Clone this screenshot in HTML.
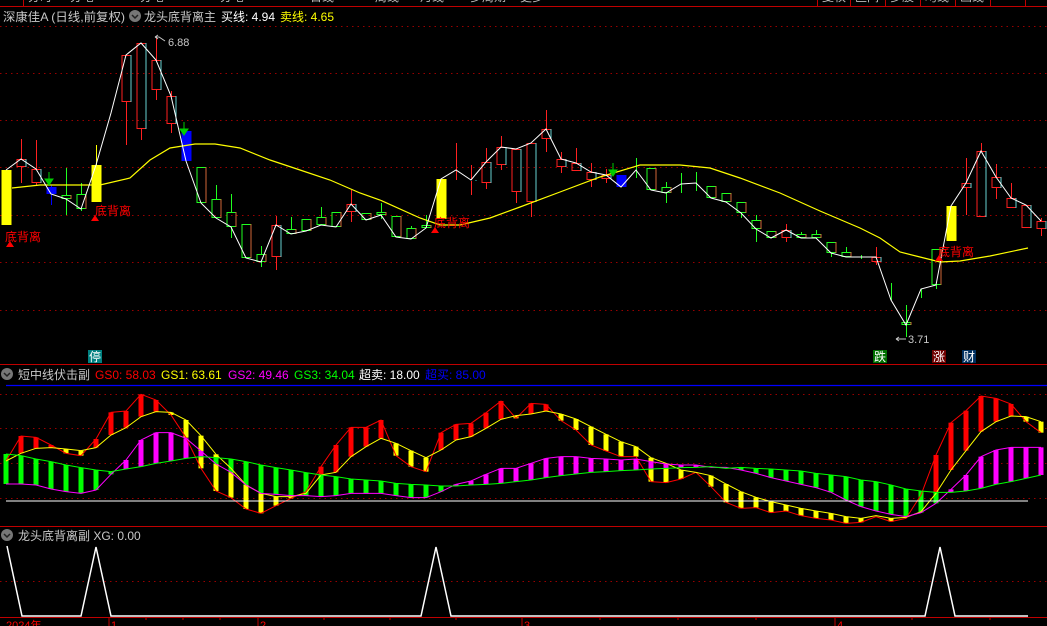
<!DOCTYPE html>
<html><head><meta charset="utf-8">
<style>
html,body{margin:0;padding:0;background:#000;width:1047px;height:626px;overflow:hidden}
svg{display:block}
text{font-family:"Liberation Sans","Noto Sans CJK SC",sans-serif}
</style></head><body>
<svg id="s" width="1047" height="626" xmlns="http://www.w3.org/2000/svg">
<rect width="1047" height="626" fill="#000"/>
<!-- top bar -->
<g fill="#bbb" font-size="12">
<text x="28" y="1">分时</text><text x="70" y="1">分笔</text><text x="140" y="1">分笔</text><text x="220" y="1">分笔</text><text x="310" y="1">日线</text><text x="375" y="1">周线</text><text x="420" y="1">月线</text><text x="470" y="1">多周期</text><text x="520" y="1">更多</text>
<text x="822" y="1">复权</text><text x="855" y="1">区间</text><text x="890" y="1">多股</text><text x="925" y="1">均线</text><text x="960" y="1">画线</text>
</g>
<line x1="0" y1="6.5" x2="1047" y2="6.5" stroke="#c00000"/>
<g stroke="#c00000"><line x1="23.5" y1="0" x2="23.5" y2="6"/><line x1="817.5" y1="0" x2="817.5" y2="6"/><line x1="850.5" y1="0" x2="850.5" y2="6"/><line x1="885.5" y1="0" x2="885.5" y2="6"/><line x1="920.5" y1="0" x2="920.5" y2="6"/><line x1="955.5" y1="0" x2="955.5" y2="6"/><line x1="990.5" y1="0" x2="990.5" y2="6"/><line x1="1025.5" y1="0" x2="1025.5" y2="6"/></g>
<!-- main header -->
<text x="3" y="21" font-size="12" fill="#c8c8c8" textLength="122" lengthAdjust="spacingAndGlyphs">深康佳A (日线,前复权)</text>
<circle cx="135" cy="16" r="6" fill="#777"/><path d="M132 15 l3 3 l3 -3" stroke="#222" stroke-width="1.5" fill="none"/>
<text x="144" y="21" font-size="12" fill="#c8c8c8" textLength="72" lengthAdjust="spacingAndGlyphs">龙头底背离主</text>
<text x="221" y="21" font-size="12" fill="#fff" textLength="54" lengthAdjust="spacingAndGlyphs">买线: 4.94</text>
<text x="280" y="21" font-size="12" fill="#ff0" textLength="54" lengthAdjust="spacingAndGlyphs">卖线: 4.65</text>
<g id="grid" stroke="#900" stroke-dasharray="1.5,4"></g>
<g id="main"></g>
<text x="168" y="46" font-size="11" fill="#c8c8c8">6.88</text>
<path d="M155 37 l3 -2 M155 37 l3 2 M155 37 h4 l6 4" stroke="#c8c8c8" fill="none"/>
<text x="908" y="343" font-size="11" fill="#c8c8c8">3.71</text>
<path d="M896 339 h10 M896 339 l3 -2 M896 339 l3 2" stroke="#c8c8c8" fill="none"/>
<g font-size="12" fill="#f00">
<text x="5" y="241">底背离</text><text x="95" y="215">底背离</text><text x="434" y="227">底背离</text><text x="938" y="256">底背离</text>
</g>
<g fill="#f00"><path d="M10 255 v-8 h-4 l4 -6 l4 6 h-4z"/><path d="M95 229 v-8 h-4 l4 -6 l4 6 h-4z"/><path d="M435 241 v-8 h-4 l4 -6 l4 6 h-4z"/><path d="M939 269 v-8 h-4 l4 -6 l4 6 h-4z"/></g>
<g fill="#0c0"><path d="M49 172 v7 h-4 l4 6 l4 -6 h-4z" stroke="#0c0"/><path d="M184 122 v7 h-4 l4 6 l4 -6 h-4z" stroke="#0c0"/><path d="M613 163 v7 h-4 l4 6 l4 -6 h-4z" stroke="#0c0"/></g>
<rect x="88" y="350" width="14" height="13" fill="#008080"/><text x="89" y="361" font-size="12" fill="#fff">停</text>
<rect x="873" y="350" width="14" height="13" fill="#007000"/><text x="874" y="361" font-size="12" fill="#fff">跌</text>
<rect x="932" y="350" width="14" height="13" fill="#700000"/><text x="933" y="361" font-size="12" fill="#fff">涨</text>
<rect x="962" y="350" width="14" height="13" fill="#003060"/><text x="963" y="361" font-size="12" fill="#fff">财</text>
<line x1="0" y1="364.5" x2="1047" y2="364.5" stroke="#c00000"/>
<!-- middle header -->
<circle cx="7" cy="374" r="6" fill="#777"/><path d="M4 373 l3 3 l3 -3" stroke="#222" stroke-width="1.5" fill="none"/>
<text y="379" font-size="12"><tspan x="18" fill="#c8c8c8">短中线伏击副</tspan><tspan x="95" fill="#f00">GS0: 58.03</tspan><tspan x="161" fill="#ff0">GS1: 63.61</tspan><tspan x="228" fill="#f0f">GS2: 49.46</tspan><tspan x="294" fill="#0f0">GS3: 34.04</tspan><tspan x="359" fill="#fff">超卖: 18.00</tspan><tspan x="425" fill="#00f">超买: 85.00</tspan></text>
<line x1="6" y1="385.5" x2="1047" y2="385.5" stroke="#00f" stroke-width="1.2"/>
<g id="mid"></g>
<line x1="6" y1="501" x2="1028" y2="501" stroke="#fff"/>
<line x1="0" y1="526.5" x2="1047" y2="526.5" stroke="#c00000"/>
<!-- bottom -->
<circle cx="7" cy="535" r="6" fill="#777"/><path d="M4 534 l3 3 l3 -3" stroke="#222" stroke-width="1.5" fill="none"/>
<text x="18" y="540" font-size="12" fill="#c8c8c8">龙头底背离副 XG: 0.00</text>
<line x1="0" y1="581.5" x2="1047" y2="581.5" stroke="#900" stroke-dasharray="1.5,4"/>
<polyline points="7,546 22,616 81,616 96,547 111,616 421,616 436,547 451,616 925,616 940,547 955,616 1028,616" stroke="#fff" stroke-width="1.5" fill="none"/>
<line x1="0" y1="617.5" x2="1047" y2="617.5" stroke="#c00000"/>
<g stroke="#c00000"><line x1="109" y1="617" x2="109" y2="626"/><line x1="258" y1="617" x2="258" y2="626"/><line x1="522" y1="617" x2="522" y2="626"/><line x1="835" y1="617" x2="835" y2="626"/>
<line x1="146" y1="617" x2="146" y2="620"/><line x1="183" y1="617" x2="183" y2="620"/><line x1="220" y1="617" x2="220" y2="620"/><line x1="324" y1="617" x2="324" y2="620"/><line x1="390" y1="617" x2="390" y2="620"/><line x1="456" y1="617" x2="456" y2="620"/><line x1="600" y1="617" x2="600" y2="620"/><line x1="678" y1="617" x2="678" y2="620"/><line x1="756" y1="617" x2="756" y2="620"/><line x1="912" y1="617" x2="912" y2="620"/><line x1="990" y1="617" x2="990" y2="620"/></g>
<g font-size="11" fill="#f00"><text x="6" y="629">2024年</text><text x="111" y="629">1</text><text x="260" y="629">2</text><text x="524" y="629">3</text><text x="837" y="629">4</text></g>
</svg>
<script>
var NS="http://www.w3.org/2000/svg";
function el(p,t,a){var e=document.createElementNS(NS,t);for(var k in a)e.setAttribute(k,a[k]);p.appendChild(e);return e;}
var g=document.getElementById('grid');
[26,73,120,167,215,262,310].forEach(function(y){el(g,'line',{x1:0,y1:y+.5,x2:1047,y2:y+.5});});
var M=document.getElementById('main');
var C=[['y',170,225,170,225],['r',159,167,139,183],['r',169,183,140,185],['b',187,194,185,205],['g',195,199,168,215],['g',194,209,183,211],['y',165,202,145,202],['r',113,113,113,113],['r',55,102,55,145],['r',43,129,43,140],['r',60,90,37,100],['r',96,124,91,133],['b',131,161,131,161],['g',167,203,167,203],['g',199,218,185,218],['g',212,227,194,238],['g',224,258,224,258],['g',254,262,246,267],['r',225,257,216,270],['g',229,234,217,234],['g',219,231,219,231],['g',217,225,207,225],['g',212,227,212,227],['r',204,212,190,222],['g',213,220,213,220],['g',212,215,203,219],['g',216,237,216,237],['g',228,239,226,239],['g',225,228,215,228],['y',179,219,179,219],['r',170,170,143,180],['r',180,181,165,195],['r',162,183,148,189],['r',147,165,136,170],['r',149,192,149,203],['r',143,202,143,217],['r',129,139,110,152],['r',159,167,152,173],['r',163,171,148,171],['r',172,180,163,187],['r',175,179,169,183],['b',175,187,175,187],['g',170,170,158,178],['g',168,190,168,190],['g',187,193,182,203],['g',184,184,173,193],['g',183,183,172,191],['g',186,198,186,198],['g',193,202,193,202],['g',202,213,202,218],['g',220,229,215,242],['g',231,238,231,238],['r',230,238,224,242],['g',234,238,232,238],['g',234,238,230,238],['g',242,253,242,257],['g',252,257,247,257],['g',257,257,255,259],['r',257,262,247,265],['g',300,300,283,300],['g',322,325,305,337],['g',289,289,289,298],['g',249,285,249,289],['y',206,241,206,241],['r',183,188,158,215],['r',151,217,143,217],['r',177,188,164,199],['r',198,208,183,208],['r',205,228,205,228],['r',221,229,218,236]];
var pts=[];
C.forEach(function(c,i){var x=6+15*i,t=c[0],col={r:'#ff2020',g:'#20ff20',y:'#ff0',b:'#0000ff'}[t];
 el(M,'line',{x1:x+.5,y1:c[3],x2:x+.5,y2:c[1],stroke:col});
 el(M,'line',{x1:x+.5,y1:c[2],x2:x+.5,y2:c[4],stroke:col});
 var h=Math.max(c[2]-c[1],1);
 if(t=='y'||t=='b') el(M,'rect',{x:x-4.5,y:c[1],width:10,height:h,fill:col});
 else {el(M,'rect',{x:x-4,y:c[1]+.5,width:9,height:Math.max(h-1,0),fill:'none',stroke:col});
  el(M,'line',{x1:x+5,y1:c[1],x2:x+5,y2:c[2],stroke:t=='r'?'#40ffff':'#ff4040','stroke-width':.8});}
 var cl=(t=='r'||t=='y')?c[1]:c[2]; pts.push(x+','+cl);});
el(M,'polyline',{points:'12,188 40,185 100,185 130,178 150,160 170,148 195,144 215,144 240,148 270,160 300,170 330,180 360,193 380,200 420,218 440,225 460,225 490,218 520,207 560,192 600,177 640,165 680,165 710,168 740,178 780,193 820,211 860,228 880,238 900,252 920,257 940,262 960,261 990,256 1028,248',fill:'none',stroke:'#ff0','stroke-width':1.2});
el(M,'polyline',{points:pts.join(' '),fill:'none',stroke:'#fff','stroke-width':1});
var D=document.getElementById('mid');
[394,428,463,498].forEach(function(y){el(D,'line',{x1:0,y1:y+.5,x2:1047,y2:y+.5,stroke:'#900','stroke-dasharray':'1.5,4'});});
var G0=[228,153,157,180,205,212,162,82,78,28,45,90,158,250,318,338,372,385,362,340,320,245,180,127,127,105,212,245,260,143,118,115,83,48,100,55,58,107,135,180,198,215,215,290,293,282,262,305,352,370,368,383,378,392,400,405,415,412,395,410,400,330,210,113,77,33,40,57,110,143];
var G1=[228,205,190,188,192,197,188,150,128,95,80,82,105,152,208,250,300,325,335,335,325,270,262,215,185,160,175,197,218,195,165,155,130,103,92,87,78,87,102,125,148,170,185,218,235,255,262,272,297,320,337,350,360,370,378,385,395,400,392,400,397,380,325,255,197,140,110,93,95,110];
var G2=[297,297,300,312,320,325,315,268,225,165,143,143,160,198,237,262,300,325,328,332,332,335,332,325,325,325,332,338,338,320,298,288,268,250,250,235,220,215,215,220,222,225,222,230,237,240,240,247,247,255,265,278,288,298,308,322,345,365,378,388,395,383,355,313,270,215,195,187,187,187];
var G3=[207,212,222,230,240,248,255,260,252,245,235,228,220,215,218,222,230,240,248,255,263,270,275,282,285,288,295,298,300,303,303,300,298,295,290,285,278,272,267,262,260,257,255,252,250,248,247,245,250,247,250,252,255,258,265,270,275,285,290,300,312,318,322,322,318,310,298,290,280,270];
function Y(v){return 385+v/3;}
function line(a,col){el(D,'polyline',{points:a.map(function(v,i){return (6+15*i)+','+Y(v);}).join(' '),fill:'none',stroke:col,'stroke-width':1});}
for(var i=0;i<70;i++){var x=6+15*i;
 var a=Y(G0[i]),b=Y(G1[i]);
 if(Math.abs(a-b)>1) el(D,'rect',{x:x-2.5,y:Math.min(a,b),width:5,height:Math.abs(a-b),fill:G0[i]<G1[i]?'#ff0000':'#ffff00'});
 a=Y(G2[i]);b=Y(G3[i]);
 if(Math.abs(a-b)>1) el(D,'rect',{x:x-2.5,y:Math.min(a,b),width:5,height:Math.abs(a-b),fill:G2[i]<G3[i]?'#ff00ff':'#00ff00'});}
line(G0,'#ff0000');line(G1,'#ffff00');line(G2,'#ff00ff');line(G3,'#00ff00');
</script>
</body></html>
